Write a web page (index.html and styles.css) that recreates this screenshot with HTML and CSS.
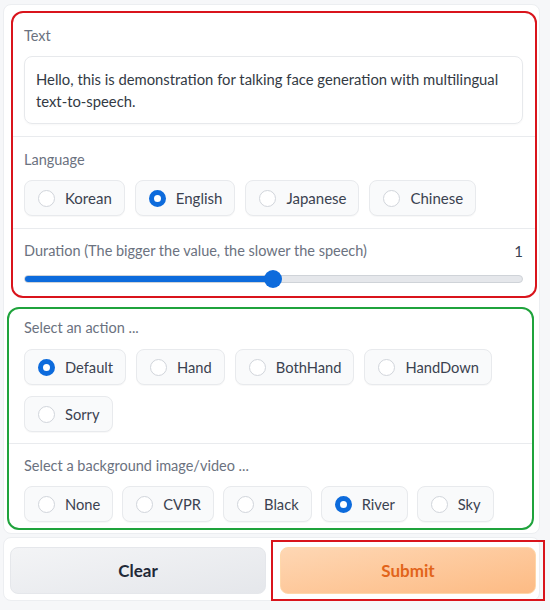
FILE: index.html
```html
<!DOCTYPE html>
<html>
<head>
<meta charset="utf-8">
<link rel="stylesheet" href="styles.css">
</head>
<body>
<div class="panel panel-main">
  <div class="group group-red">
    <div class="block block-text">
      <div class="label">Text</div>
      <div class="textarea">Hello, this is demonstration for talking face generation with multilingual text-to-speech.</div>
    </div>
    <div class="block block-lang">
      <div class="label">Language</div>
      <div class="radios">
        <div class="pill"><span class="dot"></span><span class="pill-text">Korean</span></div>
        <div class="pill"><span class="dot on"></span><span class="pill-text">English</span></div>
        <div class="pill"><span class="dot"></span><span class="pill-text">Japanese</span></div>
        <div class="pill"><span class="dot"></span><span class="pill-text">Chinese</span></div>
      </div>
    </div>
    <div class="block block-dur">
      <div class="label-row"><span class="label">Duration (The bigger the value, the slower the speech)</span><span class="value">1</span></div>
      <div class="slider">
        <div class="track"><div class="fill" style="width:50%"></div></div>
        <div class="thumb" style="left:50%"></div>
      </div>
    </div>
  </div>
  <div class="group group-green">
    <div class="block block-action">
      <div class="label">Select an action ...</div>
      <div class="radios">
        <div class="pill"><span class="dot on"></span><span class="pill-text">Default</span></div>
        <div class="pill"><span class="dot"></span><span class="pill-text">Hand</span></div>
        <div class="pill"><span class="dot"></span><span class="pill-text">BothHand</span></div>
        <div class="pill"><span class="dot"></span><span class="pill-text">HandDown</span></div>
        <div class="pill"><span class="dot"></span><span class="pill-text">Sorry</span></div>
      </div>
    </div>
    <div class="block block-bg">
      <div class="label">Select a background image/video ...</div>
      <div class="radios">
        <div class="pill"><span class="dot"></span><span class="pill-text">None</span></div>
        <div class="pill"><span class="dot"></span><span class="pill-text">CVPR</span></div>
        <div class="pill"><span class="dot"></span><span class="pill-text">Black</span></div>
        <div class="pill"><span class="dot on"></span><span class="pill-text">River</span></div>
        <div class="pill"><span class="dot"></span><span class="pill-text">Sky</span></div>
      </div>
    </div>
  </div>
</div>
<div class="panel panel-buttons">
  <button class="btn btn-clear">Clear</button>
  <div class="submit-wrap"><button class="btn btn-submit">Submit</button></div>
</div>
</body>
</html>
```
FILE: styles.css
```css
* { box-sizing: border-box; }
html, body { margin: 0; padding: 0; }
body {
  background: #f6f7f9;
  font-family: Lato, "Noto Sans", sans-serif;
  font-size: 15px;
  color: #374151;
  width: 550px;
  height: 610px;
  overflow: hidden;
}
.panel {
  background: #ffffff;
  border: 1px solid #eceef1;
  border-radius: 8px;
  margin-left: 3px;
  width: 537px;
}
.panel-main {
  margin-top: 4px;
  padding: 6px 0 3px 0;
}
.group {
  background: #ffffff;
  border-radius: 12px;
  display: flex;
  flex-direction: column;
}
.group-red {
  border: 2px solid #d9141c;
  margin-left: 7px;
  width: 526px;
  height: 287px;
}
.group-green {
  border: 2px solid #1fa33c;
  margin-left: 3px;
  margin-top: 9px;
  width: 527px;
  height: 223px;
}
.block { border-bottom: 1px solid #e9ebee; }
.block:last-child { border-bottom: none; }
.group-red .block { padding-left: 11px; padding-right: 12px; }
.group-green .block { padding-left: 15px; padding-right: 9px; }
.label {
  color: #6b7280;
  line-height: 20px;
  font-size: 14.5px;
}
.block-text { padding-top: 13px; padding-bottom: 12px; height: 124px; }
.textarea {
  margin-top: 10px;
  height: 68px;
  border: 1px solid #e7e9ec;
  border-radius: 8px;
  padding: 11px 11px;
  line-height: 22px;
  font-size: 14.8px;
  color: #333a44;
  box-shadow: 0 1px 2px rgba(0,0,0,0.03);
}
.block-lang { padding-top: 13px; height: 92px; }
.radios {
  display: flex;
  flex-wrap: wrap;
  gap: 10px 9px;
  margin-top: 10px;
}
.block-lang .radios { gap: 10px; }
.block-lang .pill { font-size: 15px; }
.pill {
  display: flex;
  align-items: center;
  gap: 10px;
  height: 36px;
  padding: 0 12px 0 13px;
  background: #f9fafb;
  border: 1px solid #e8eaed;
  border-radius: 8px;
  box-shadow: 0 1px 1px rgba(0,0,0,0.03);
  font-size: 14.7px;
}
.dot {
  width: 17px;
  height: 17px;
  border-radius: 50%;
  border: 1px solid #d1d5db;
  background: #ffffff;
  flex: none;
}
.dot.on {
  border: 5.5px solid #0d6bdc;
  background: #ffffff;
}
.pill-text { color: #3b4250; }
.block-dur { padding-top: 12px; flex: 1; }
.label-row {
  display: flex;
  justify-content: space-between;
  align-items: center;
}
.value { color: #374151; line-height: 20px; }
.slider {
  position: relative;
  margin-top: 8px;
  height: 20px;
  display: flex;
  align-items: center;
}
.track {
  width: 100%;
  height: 8px;
  border-radius: 4px;
  background: #e5e7eb;
  border: 1px solid #cfd3d8;
  overflow: hidden;
}
.fill { height: 100%; background: #0d6bdc; }
.thumb {
  position: absolute;
  top: 1px;
  width: 18px;
  height: 18px;
  margin-left: -10px;
  border-radius: 50%;
  background: #0d6bdc;
}
.block-action { padding-top: 9px; height: 135px; }
.block-action .radios { margin-top: 11px; gap: 11px 10px; }
.block-bg { padding-top: 12px; flex: 1; }
.block-bg .radios { gap: 10px 9px; }
.panel-buttons {
  margin-top: 3px;
  height: 64px;
  padding: 2px 0 0 6px;
  display: flex;
  align-items: flex-start;
}
.btn {
  font-family: Lato, "Noto Sans", sans-serif;
  font-weight: 700;
  font-size: 17px;
  width: 256px;
  height: 47px;
  border-radius: 8px;
  cursor: pointer;
  flex: none;
}
.btn-clear {
  margin-top: 7px;
  background: linear-gradient(to bottom right, #f3f4f6, #e5e7eb);
  border: 1px solid #e5e7eb;
  color: #1f2937;
}
.submit-wrap {
  margin-left: 5px;
  border: 2px solid #d9141c;
  padding: 5px 7px;
  width: 274px;
  height: 61px;
  flex: none;
}
.btn-submit {
  background: linear-gradient(to bottom right, #fed7b4, #fdbb84);
  border: 1px solid #fed7aa;
  color: #e2641a;
}
```
